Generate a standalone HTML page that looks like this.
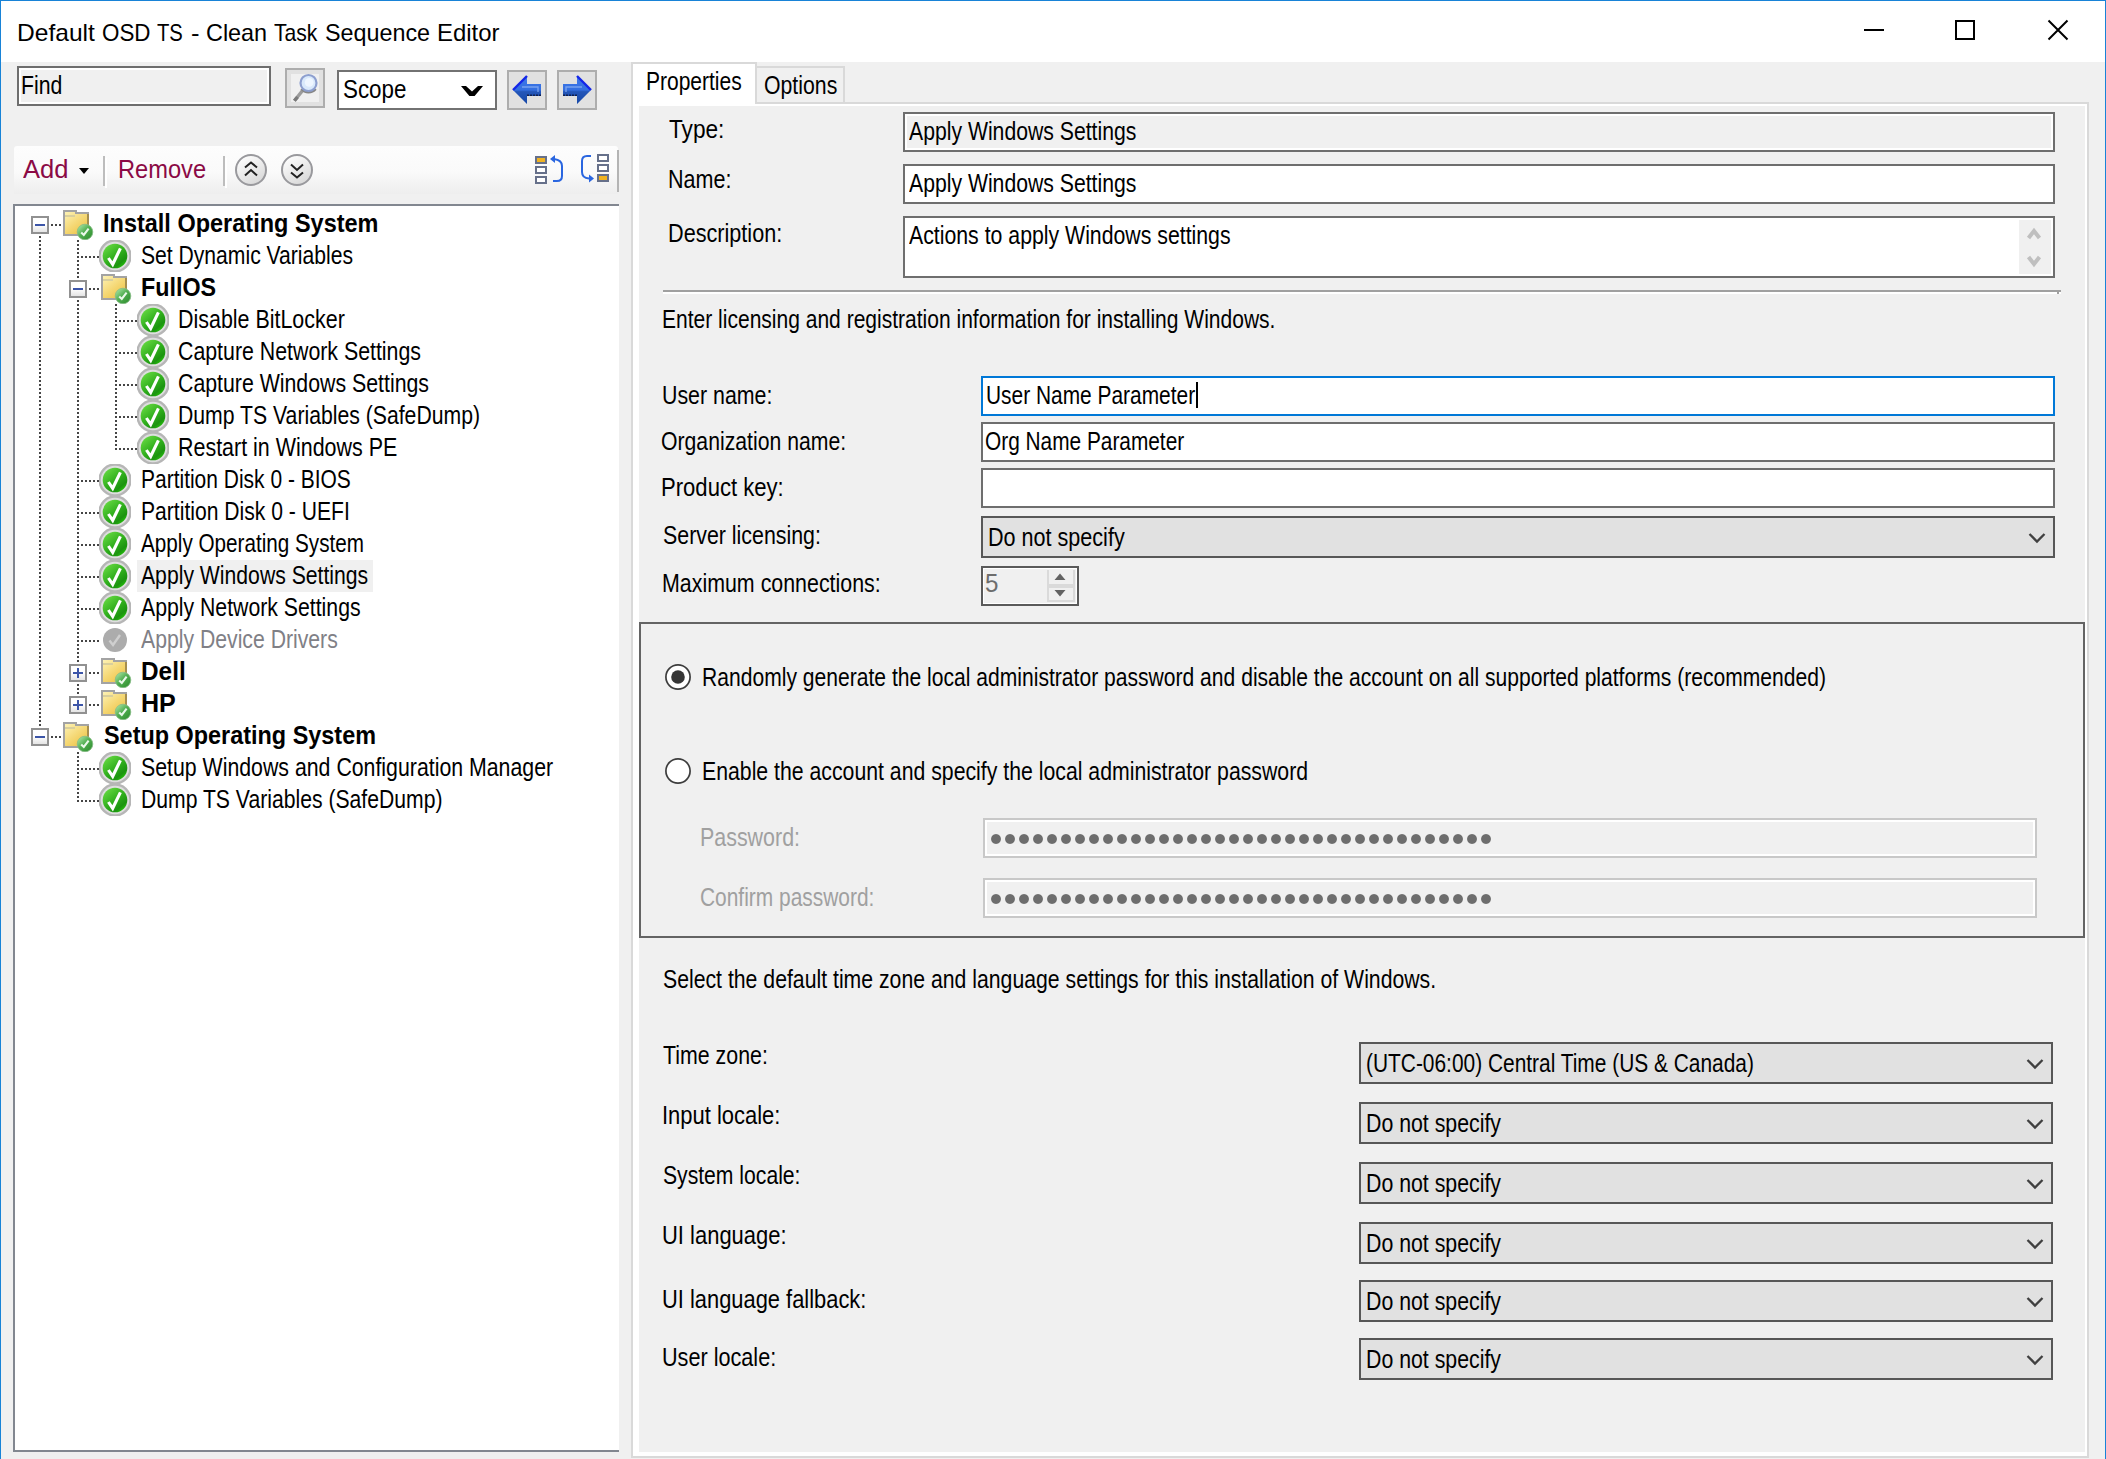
<!DOCTYPE html>
<html lang="en">
<head>
<meta charset="utf-8">
<title>Default OSD TS - Clean Task Sequence Editor</title>
<style>
html,body{margin:0;padding:0;}
body{width:2106px;height:1459px;position:relative;overflow:hidden;background:#f0f0f0;
 font-family:"Liberation Sans",sans-serif;color:#000;}
.a{position:absolute;box-sizing:border-box;}
.t{position:absolute;white-space:pre;line-height:30px;transform-origin:0 0;font-family:"Liberation Sans",sans-serif;}
/* text box: dark border + white inner */
.tb{position:absolute;box-sizing:border-box;border:2px solid #6e6e6e;background:#fff;}
.tb.ro{background:#f0f0f0;box-shadow:inset 0 0 0 2px #fff;}
.cb{position:absolute;box-sizing:border-box;border:2px solid #575757;background:#e1e1e1;}
.btn{position:absolute;box-sizing:border-box;border:2px solid #adadad;background:#e1e1e1;}
.vd{position:absolute;width:2px;background:repeating-linear-gradient(to bottom,#454545 0,#454545 2px,transparent 2px,transparent 4px);}
.hd{position:absolute;height:2px;background:repeating-linear-gradient(to right,#454545 0,#454545 2px,transparent 2px,transparent 4px);}
.eb{position:absolute;box-sizing:border-box;width:18px;height:18px;border:2px solid #919191;background:linear-gradient(#fff 45%,#e4e4e4);}
.eb i{position:absolute;left:2px;top:6px;width:10px;height:2px;background:#3c55a8;}
.eb b{position:absolute;left:6px;top:2px;width:2px;height:10px;background:#3c55a8;}
svg{position:absolute;overflow:visible;}
.pw{position:absolute;height:10px;width:504px;background:radial-gradient(circle at 5px 5px,#6d6d6d 4.4px,rgba(109,109,109,0) 5.4px) 0 0/14px 10px repeat-x;}
</style>
</head>
<body>
<svg width="0" height="0" style="left:0;top:0">
 <defs>
  <linearGradient id="gG" x1="0.15" y1="0.1" x2="0.85" y2="0.95">
   <stop offset="0" stop-color="#62d63f"/><stop offset="0.5" stop-color="#2fae1c"/><stop offset="0.8" stop-color="#1c9410"/><stop offset="1" stop-color="#25c708"/>
  </linearGradient>
  <linearGradient id="gB" x1="0.1" y1="0.1" x2="0.9" y2="0.95">
   <stop offset="0" stop-color="#a4e3a0"/><stop offset="0.45" stop-color="#52ae52"/><stop offset="1" stop-color="#2f8f2f"/>
  </linearGradient>
  <linearGradient id="gF" x1="0.1" y1="0" x2="0.9" y2="1">
   <stop offset="0" stop-color="#fdf2b4"/><stop offset="0.5" stop-color="#f5d875"/><stop offset="1" stop-color="#ecbf3e"/>
  </linearGradient>
  <linearGradient id="gC" x1="0.2" y1="0" x2="0.8" y2="1">
   <stop offset="0" stop-color="#ffffff"/><stop offset="1" stop-color="#d6d6d6"/>
  </linearGradient>
  <linearGradient id="gA" x1="0" y1="0" x2="0" y2="1">
   <stop offset="0" stop-color="#3f78ea"/><stop offset="0.5" stop-color="#346fe0"/><stop offset="0.56" stop-color="#2456b8"/><stop offset="1" stop-color="#1648a8"/>
  </linearGradient>
 </defs>
</svg>

<!-- window frame -->
<div class="a" style="left:1px;top:1px;width:2104px;height:61px;background:#fff"></div>
<div class="a" style="left:0;top:0;width:2106px;height:1px;background:#1883d7"></div>
<div class="a" style="left:0;top:0;width:1px;height:1459px;background:#1883d7"></div>
<div class="a" style="left:2105px;top:0;width:1px;height:1459px;background:#1883d7"></div>
<!-- caption buttons -->
<div class="a" style="left:1864px;top:29px;width:20px;height:2px;background:#000"></div>
<div class="a" style="left:1955px;top:20px;width:20px;height:20px;border:2px solid #000"></div>
<svg style="left:2048px;top:20px" width="20" height="20"><path d="M0.5 0.5 L19.5 19.5 M19.5 0.5 L0.5 19.5" stroke="#000" stroke-width="2" fill="none"/></svg>

<!-- ===== left panel ===== -->
<div class="tb ro" style="left:17px;top:66px;width:254px;height:40px"></div>
<div class="btn" style="left:285px;top:68px;width:40px;height:40px"></div>
<div class="a" style="left:291px;top:74px;width:28px;height:28px;background:#f0f0f0"></div>
<svg style="left:291px;top:74px" width="28" height="28">
 <path d="M11.2 17 L3.4 26.8" stroke="#9c9c9c" stroke-width="3.4" stroke-linecap="butt"/>
 <path d="M6.5 23 L3.4 26.8" stroke="#7a7a7a" stroke-width="3.4" stroke-linecap="butt"/>
 <path d="M10.4 14.8 A9.2 9.2 0 0 0 24.6 14.8" fill="none" stroke="#868686" stroke-width="2.6"/>
 <circle cx="17.5" cy="9" r="8" fill="#d9e9fb" stroke="#8d9fcf" stroke-width="2.2"/>
 <circle cx="18.2" cy="8.4" r="4.4" fill="#eef6ff"/>
</svg>
<div class="a" style="left:337px;top:70px;width:160px;height:40px;border:2px solid #727272;background:#fff"></div>
<svg style="left:461px;top:86px" width="22" height="10"><path d="M0 0 H5 L11 5.6 L17 0 H22 L13.6 10 H8.4 Z" fill="#000"/></svg>
<div class="btn" style="left:507px;top:70px;width:40px;height:40px"></div>
<div class="btn" style="left:557px;top:70px;width:40px;height:40px"></div>
<svg style="left:513px;top:76px" width="28" height="28"><path d="M0 14 L14 0 V8 H28 V20 H14 V28 Z" fill="url(#gA)"/><path d="M0 14 L14 0" stroke="#1426e8" stroke-width="2.4" fill="none"/><path d="M14 19.2 H28" stroke="#10204c" stroke-width="1.6" stroke-dasharray="2 1"/><path d="M9 11 H25 V16" fill="none" stroke="#8db2f4" stroke-width="1.4" opacity=".75"/></svg>
<svg style="left:563px;top:76px" width="28" height="28"><path d="M28 14 L14 0 V8 H0 V20 H14 V28 Z" fill="url(#gA)"/><path d="M28 14 L14 0" stroke="#1426e8" stroke-width="2.4" fill="none"/><path d="M0 19.2 H14" stroke="#10204c" stroke-width="1.6" stroke-dasharray="2 1"/><path d="M3 16 V11 H19" fill="none" stroke="#8db2f4" stroke-width="1.4" opacity=".75"/></svg>

<!-- toolbar -->
<div class="a" style="left:14px;top:146px;width:604px;height:48px;background:linear-gradient(#fdfdfd 0,#fafafa 55%,#f1f1f1 85%,#eeeeee 100%);border-radius:3px 3px 0 0"></div>
<div class="a" style="left:617px;top:150px;width:2px;height:42px;background:#b4b4b4"></div>
<svg style="left:79px;top:168px" width="10" height="6"><path d="M0 0 H10 L5 6 Z" fill="#000"/></svg>
<div class="a" style="left:103px;top:156px;width:2px;height:30px;background:#bdbdbd"></div>
<div class="a" style="left:105px;top:158px;width:2px;height:30px;background:#fff"></div>
<div class="a" style="left:223px;top:156px;width:2px;height:30px;background:#bdbdbd"></div>
<div class="a" style="left:225px;top:158px;width:2px;height:30px;background:#fff"></div>
<svg style="left:235px;top:154px" width="32" height="32"><circle cx="16" cy="16" r="15" fill="url(#gC)" stroke="#99999d" stroke-width="2"/><path d="M10 13.5 L16 8.5 L22 13.5 M10 21.5 L16 16 L22 21.5" fill="none" stroke="#222" stroke-width="2"/></svg>
<svg style="left:281px;top:154px" width="32" height="32"><circle cx="16" cy="16" r="15" fill="url(#gC)" stroke="#99999d" stroke-width="2"/><path d="M10 10.5 L16 16 L22 10.5 M10 18.5 L16 23.5 L22 18.5" fill="none" stroke="#222" stroke-width="2"/></svg>
<!-- move up / move down icons -->
<svg style="left:535px;top:154px" width="32" height="32">
 <rect x="1" y="3" width="10" height="6" fill="#f0b323" stroke="#66708a" stroke-width="2"/>
 <rect x="1" y="13" width="10" height="6" fill="#fff" stroke="#66708a" stroke-width="2"/>
 <rect x="1" y="23" width="10" height="6" fill="#fff" stroke="#66708a" stroke-width="2"/>
 <path d="M18 27 H22 Q27 27 27 22 V12 Q27 6 19 5" fill="none" stroke="#2a66e0" stroke-width="2"/>
 <path d="M15 5 L20 1 V9 Z" fill="#2a66e0"/>
</svg>
<svg style="left:579px;top:152px" width="32" height="32">
 <rect x="19" y="3" width="10" height="6" fill="#fff" stroke="#66708a" stroke-width="2"/>
 <rect x="19" y="13" width="10" height="6" fill="#fff" stroke="#66708a" stroke-width="2"/>
 <rect x="19" y="23" width="10" height="6" fill="#f0b323" stroke="#66708a" stroke-width="2"/>
 <path d="M12 4 H8 Q3 4 3 9 V20 Q3 26 10 26.5" fill="none" stroke="#2a66e0" stroke-width="2"/>
 <path d="M15 26.5 L10 22.5 V30.5 Z" fill="#2a66e0"/>
</svg>

<!-- tree -->
<div class="a" style="left:13px;top:204px;width:606px;height:1248px;background:#fff;border:2px solid #828790;border-right:none"></div>
<div class="a" style="left:137px;top:560px;width:236px;height:32px;background:#f0f0f0"></div>
<div class="vd" style="left:39px;top:236px;height:492px"></div>
<div class="vd" style="left:77px;top:240px;height:456px"></div>
<div class="vd" style="left:115px;top:304px;height:146px"></div>
<div class="vd" style="left:77px;top:752px;height:50px"></div>
<div class="hd" style="left:51px;top:224px;width:12px"></div>
<div class="eb" style="left:31px;top:216px"><i></i></div>
<svg style="left:63px;top:208px;overflow:hidden" width="32" height="32" viewBox="0 0 32 32"><path d="M1 3 H13 V5 H25 V27 H1 Z" fill="url(#gF)" stroke="#a3a3a3" stroke-width="2"/><path d="M2 8 H12" stroke="#d9cf9c" stroke-width="2"/><path d="M25 6 V26" stroke="#a58e4e" stroke-width="2"/><circle cx="22" cy="24" r="7.8" fill="url(#gB)" stroke="#86bb86" stroke-width="0.8"/><path d="M18.2 24.4 L20.8 27 L25.6 20.6" fill="none" stroke="#eaf8ea" stroke-width="2.1"/></svg>
<div class="hd" style="left:77px;top:256px;width:22px"></div>
<svg style="left:99px;top:240px;overflow:hidden" width="32" height="32" viewBox="0 0 32 32"><circle cx="16" cy="16" r="15.5" fill="#dedede" stroke="#b6b6b6" stroke-width="2.4"/><circle cx="16" cy="16" r="12.3" fill="url(#gG)"/><path d="M9.4 18 L13.7 24.3 L21.4 8.4" fill="none" stroke="#fff" stroke-width="3.1"/></svg>
<div class="hd" style="left:89px;top:288px;width:12px"></div>
<div class="eb" style="left:69px;top:280px"><i></i></div>
<svg style="left:101px;top:272px;overflow:hidden" width="32" height="32" viewBox="0 0 32 32"><path d="M1 3 H13 V5 H25 V27 H1 Z" fill="url(#gF)" stroke="#a3a3a3" stroke-width="2"/><path d="M2 8 H12" stroke="#d9cf9c" stroke-width="2"/><path d="M25 6 V26" stroke="#a58e4e" stroke-width="2"/><circle cx="22" cy="24" r="7.8" fill="url(#gB)" stroke="#86bb86" stroke-width="0.8"/><path d="M18.2 24.4 L20.8 27 L25.6 20.6" fill="none" stroke="#eaf8ea" stroke-width="2.1"/></svg>
<div class="hd" style="left:115px;top:320px;width:22px"></div>
<svg style="left:137px;top:304px;overflow:hidden" width="32" height="32" viewBox="0 0 32 32"><circle cx="16" cy="16" r="15.5" fill="#dedede" stroke="#b6b6b6" stroke-width="2.4"/><circle cx="16" cy="16" r="12.3" fill="url(#gG)"/><path d="M9.4 18 L13.7 24.3 L21.4 8.4" fill="none" stroke="#fff" stroke-width="3.1"/></svg>
<div class="hd" style="left:115px;top:352px;width:22px"></div>
<svg style="left:137px;top:336px;overflow:hidden" width="32" height="32" viewBox="0 0 32 32"><circle cx="16" cy="16" r="15.5" fill="#dedede" stroke="#b6b6b6" stroke-width="2.4"/><circle cx="16" cy="16" r="12.3" fill="url(#gG)"/><path d="M9.4 18 L13.7 24.3 L21.4 8.4" fill="none" stroke="#fff" stroke-width="3.1"/></svg>
<div class="hd" style="left:115px;top:384px;width:22px"></div>
<svg style="left:137px;top:368px;overflow:hidden" width="32" height="32" viewBox="0 0 32 32"><circle cx="16" cy="16" r="15.5" fill="#dedede" stroke="#b6b6b6" stroke-width="2.4"/><circle cx="16" cy="16" r="12.3" fill="url(#gG)"/><path d="M9.4 18 L13.7 24.3 L21.4 8.4" fill="none" stroke="#fff" stroke-width="3.1"/></svg>
<div class="hd" style="left:115px;top:416px;width:22px"></div>
<svg style="left:137px;top:400px;overflow:hidden" width="32" height="32" viewBox="0 0 32 32"><circle cx="16" cy="16" r="15.5" fill="#dedede" stroke="#b6b6b6" stroke-width="2.4"/><circle cx="16" cy="16" r="12.3" fill="url(#gG)"/><path d="M9.4 18 L13.7 24.3 L21.4 8.4" fill="none" stroke="#fff" stroke-width="3.1"/></svg>
<div class="hd" style="left:115px;top:448px;width:22px"></div>
<svg style="left:137px;top:432px;overflow:hidden" width="32" height="32" viewBox="0 0 32 32"><circle cx="16" cy="16" r="15.5" fill="#dedede" stroke="#b6b6b6" stroke-width="2.4"/><circle cx="16" cy="16" r="12.3" fill="url(#gG)"/><path d="M9.4 18 L13.7 24.3 L21.4 8.4" fill="none" stroke="#fff" stroke-width="3.1"/></svg>
<div class="hd" style="left:77px;top:480px;width:22px"></div>
<svg style="left:99px;top:464px;overflow:hidden" width="32" height="32" viewBox="0 0 32 32"><circle cx="16" cy="16" r="15.5" fill="#dedede" stroke="#b6b6b6" stroke-width="2.4"/><circle cx="16" cy="16" r="12.3" fill="url(#gG)"/><path d="M9.4 18 L13.7 24.3 L21.4 8.4" fill="none" stroke="#fff" stroke-width="3.1"/></svg>
<div class="hd" style="left:77px;top:512px;width:22px"></div>
<svg style="left:99px;top:496px;overflow:hidden" width="32" height="32" viewBox="0 0 32 32"><circle cx="16" cy="16" r="15.5" fill="#dedede" stroke="#b6b6b6" stroke-width="2.4"/><circle cx="16" cy="16" r="12.3" fill="url(#gG)"/><path d="M9.4 18 L13.7 24.3 L21.4 8.4" fill="none" stroke="#fff" stroke-width="3.1"/></svg>
<div class="hd" style="left:77px;top:544px;width:22px"></div>
<svg style="left:99px;top:528px;overflow:hidden" width="32" height="32" viewBox="0 0 32 32"><circle cx="16" cy="16" r="15.5" fill="#dedede" stroke="#b6b6b6" stroke-width="2.4"/><circle cx="16" cy="16" r="12.3" fill="url(#gG)"/><path d="M9.4 18 L13.7 24.3 L21.4 8.4" fill="none" stroke="#fff" stroke-width="3.1"/></svg>
<div class="hd" style="left:77px;top:576px;width:22px"></div>
<svg style="left:99px;top:560px;overflow:hidden" width="32" height="32" viewBox="0 0 32 32"><circle cx="16" cy="16" r="15.5" fill="#dedede" stroke="#b6b6b6" stroke-width="2.4"/><circle cx="16" cy="16" r="12.3" fill="url(#gG)"/><path d="M9.4 18 L13.7 24.3 L21.4 8.4" fill="none" stroke="#fff" stroke-width="3.1"/></svg>
<div class="hd" style="left:77px;top:608px;width:22px"></div>
<svg style="left:99px;top:592px;overflow:hidden" width="32" height="32" viewBox="0 0 32 32"><circle cx="16" cy="16" r="15.5" fill="#dedede" stroke="#b6b6b6" stroke-width="2.4"/><circle cx="16" cy="16" r="12.3" fill="url(#gG)"/><path d="M9.4 18 L13.7 24.3 L21.4 8.4" fill="none" stroke="#fff" stroke-width="3.1"/></svg>
<div class="hd" style="left:77px;top:640px;width:22px"></div>
<svg style="left:99px;top:624px;overflow:hidden" width="32" height="32" viewBox="0 0 32 32"><circle cx="16" cy="16" r="12" fill="#acacac"/><path d="M10.5 16.5 L14 21 L21 11" fill="none" stroke="#cfcfcf" stroke-width="2.4"/></svg>
<div class="hd" style="left:89px;top:672px;width:12px"></div>
<div class="eb" style="left:69px;top:664px"><i></i><b></b></div>
<svg style="left:101px;top:656px;overflow:hidden" width="32" height="32" viewBox="0 0 32 32"><path d="M1 3 H13 V5 H25 V27 H1 Z" fill="url(#gF)" stroke="#a3a3a3" stroke-width="2"/><path d="M2 8 H12" stroke="#d9cf9c" stroke-width="2"/><path d="M25 6 V26" stroke="#a58e4e" stroke-width="2"/><circle cx="22" cy="24" r="7.8" fill="url(#gB)" stroke="#86bb86" stroke-width="0.8"/><path d="M18.2 24.4 L20.8 27 L25.6 20.6" fill="none" stroke="#eaf8ea" stroke-width="2.1"/></svg>
<div class="hd" style="left:89px;top:704px;width:12px"></div>
<div class="eb" style="left:69px;top:696px"><i></i><b></b></div>
<svg style="left:101px;top:688px;overflow:hidden" width="32" height="32" viewBox="0 0 32 32"><path d="M1 3 H13 V5 H25 V27 H1 Z" fill="url(#gF)" stroke="#a3a3a3" stroke-width="2"/><path d="M2 8 H12" stroke="#d9cf9c" stroke-width="2"/><path d="M25 6 V26" stroke="#a58e4e" stroke-width="2"/><circle cx="22" cy="24" r="7.8" fill="url(#gB)" stroke="#86bb86" stroke-width="0.8"/><path d="M18.2 24.4 L20.8 27 L25.6 20.6" fill="none" stroke="#eaf8ea" stroke-width="2.1"/></svg>
<div class="hd" style="left:51px;top:736px;width:12px"></div>
<div class="eb" style="left:31px;top:728px"><i></i></div>
<svg style="left:63px;top:720px;overflow:hidden" width="32" height="32" viewBox="0 0 32 32"><path d="M1 3 H13 V5 H25 V27 H1 Z" fill="url(#gF)" stroke="#a3a3a3" stroke-width="2"/><path d="M2 8 H12" stroke="#d9cf9c" stroke-width="2"/><path d="M25 6 V26" stroke="#a58e4e" stroke-width="2"/><circle cx="22" cy="24" r="7.8" fill="url(#gB)" stroke="#86bb86" stroke-width="0.8"/><path d="M18.2 24.4 L20.8 27 L25.6 20.6" fill="none" stroke="#eaf8ea" stroke-width="2.1"/></svg>
<div class="hd" style="left:77px;top:768px;width:22px"></div>
<svg style="left:99px;top:752px;overflow:hidden" width="32" height="32" viewBox="0 0 32 32"><circle cx="16" cy="16" r="15.5" fill="#dedede" stroke="#b6b6b6" stroke-width="2.4"/><circle cx="16" cy="16" r="12.3" fill="url(#gG)"/><path d="M9.4 18 L13.7 24.3 L21.4 8.4" fill="none" stroke="#fff" stroke-width="3.1"/></svg>
<div class="hd" style="left:77px;top:800px;width:22px"></div>
<svg style="left:99px;top:784px;overflow:hidden" width="32" height="32" viewBox="0 0 32 32"><circle cx="16" cy="16" r="15.5" fill="#dedede" stroke="#b6b6b6" stroke-width="2.4"/><circle cx="16" cy="16" r="12.3" fill="url(#gG)"/><path d="M9.4 18 L13.7 24.3 L21.4 8.4" fill="none" stroke="#fff" stroke-width="3.1"/></svg>

<!-- ===== right panel: tab control ===== -->
<div class="a" style="left:631px;top:102px;width:1458px;height:1356px;border:2px solid #d9d9d9;background:#fff"></div>
<div class="a" style="left:639px;top:106px;width:1446px;height:1346px;background:#f0f0f0"></div>
<div class="a" style="left:755px;top:66px;width:90px;height:38px;border:2px solid #d9d9d9;background:#f0f0f0"></div>
<div class="a" style="left:631px;top:62px;width:126px;height:42px;border:2px solid #d9d9d9;border-bottom:none;background:#fff"></div>

<!-- header fields -->
<div class="tb ro" style="left:903px;top:112px;width:1152px;height:40px"></div>
<div class="tb" style="left:903px;top:164px;width:1152px;height:40px"></div>
<div class="tb" style="left:903px;top:216px;width:1152px;height:62px"></div>
<div class="a" style="left:2019px;top:220px;width:32px;height:54px;background:#f0f0f0"></div>
<svg style="left:2019px;top:220px" width="32" height="54"><path d="M9.5 18 L15 11 L20.5 18 M9.5 37 L15 44 L20.5 37" fill="none" stroke="#bfbfbf" stroke-width="4"/></svg>
<div class="a" style="left:663px;top:290px;width:1398px;height:2px;background:#a0a0a0"></div>
<div class="a" style="left:663px;top:292px;width:1398px;height:2px;background:#fff"></div>
<div class="a" style="left:2057px;top:292px;width:2px;height:2px;background:#a0a0a0"></div>

<!-- licensing -->
<div class="tb" style="left:981px;top:376px;width:1074px;height:40px;border-color:#0078d7"></div>
<div class="a" style="left:1196px;top:382px;width:2px;height:26px;background:#000"></div>
<div class="tb" style="left:981px;top:422px;width:1074px;height:40px"></div>
<div class="tb" style="left:981px;top:468px;width:1074px;height:40px"></div>
<div class="cb" style="left:981px;top:516px;width:1074px;height:42px"></div>
<svg style="left:2028px;top:532px" width="18" height="12"><path d="M1.5 2 L9 9.5 L16.5 2" fill="none" stroke="#404040" stroke-width="2.3"/></svg>
<div class="tb ro" style="left:981px;top:566px;width:98px;height:40px;border-color:#5a5a5a;box-shadow:inset 0 0 0 1px #fff"></div>
<div class="a" style="left:1047px;top:570px;width:28px;height:32px;border:2px solid #dadada;border-top:none;background:#f0f0f0"></div>
<div class="a" style="left:1049px;top:584px;width:24px;height:4px;background:#dadada"></div>
<svg style="left:1054px;top:573px" width="12" height="24"><path d="M6 0.5 L11.5 7 H0.5 Z M0.5 17 H11.5 L6 23.5 Z" fill="#636363"/></svg>

<!-- group box -->
<div class="a" style="left:639px;top:622px;width:1446px;height:316px;border:2px solid #646464"></div>
<svg style="left:665px;top:664px" width="26" height="26"><circle cx="13" cy="13" r="12.1" fill="#fff" stroke="#3d3d3d" stroke-width="1.7"/><circle cx="13" cy="13" r="6.8" fill="#363636"/></svg>
<svg style="left:665px;top:758px" width="26" height="26"><circle cx="13" cy="13" r="12.1" fill="#fff" stroke="#3d3d3d" stroke-width="1.7"/></svg>
<div class="a" style="left:983px;top:818px;width:1054px;height:40px;border:2px solid #c8c8c8;background:#f0f0f0;box-shadow:inset 0 0 0 2px #fff"></div>
<div class="a" style="left:983px;top:878px;width:1054px;height:40px;border:2px solid #c8c8c8;background:#f0f0f0;box-shadow:inset 0 0 0 2px #fff"></div>
<div class="pw" style="left:991px;top:834px"></div>
<div class="pw" style="left:991px;top:894px"></div>

<!-- locale combos -->
<div class="cb" style="left:1359px;top:1042px;width:694px;height:42px"></div>
<svg style="left:2026px;top:1058px" width="18" height="12"><path d="M1.5 2 L9 9.5 L16.5 2" fill="none" stroke="#404040" stroke-width="2.3"/></svg>
<div class="cb" style="left:1359px;top:1102px;width:694px;height:42px"></div>
<svg style="left:2026px;top:1118px" width="18" height="12"><path d="M1.5 2 L9 9.5 L16.5 2" fill="none" stroke="#404040" stroke-width="2.3"/></svg>
<div class="cb" style="left:1359px;top:1162px;width:694px;height:42px"></div>
<svg style="left:2026px;top:1178px" width="18" height="12"><path d="M1.5 2 L9 9.5 L16.5 2" fill="none" stroke="#404040" stroke-width="2.3"/></svg>
<div class="cb" style="left:1359px;top:1222px;width:694px;height:42px"></div>
<svg style="left:2026px;top:1238px" width="18" height="12"><path d="M1.5 2 L9 9.5 L16.5 2" fill="none" stroke="#404040" stroke-width="2.3"/></svg>
<div class="cb" style="left:1359px;top:1280px;width:694px;height:42px"></div>
<svg style="left:2026px;top:1296px" width="18" height="12"><path d="M1.5 2 L9 9.5 L16.5 2" fill="none" stroke="#404040" stroke-width="2.3"/></svg>
<div class="cb" style="left:1359px;top:1338px;width:694px;height:42px"></div>
<svg style="left:2026px;top:1354px" width="18" height="12"><path d="M1.5 2 L9 9.5 L16.5 2" fill="none" stroke="#404040" stroke-width="2.3"/></svg>

<span class="t" style="left:16.68px;top:17.68px;font-size:24px;transform:scaleX(1.0236);">Default</span>
<span class="t" style="left:101.75px;top:17.68px;font-size:24px;transform:scaleX(0.9331);">OSD</span>
<span class="t" style="left:156.88px;top:17.68px;font-size:24px;transform:scaleX(0.8434);">TS</span>
<span class="t" style="left:190.70px;top:17.68px;font-size:24px;transform:scaleX(1.0667);">-</span>
<span class="t" style="left:206.40px;top:17.68px;font-size:24px;transform:scaleX(0.9745);">Clean</span>
<span class="t" style="left:274.27px;top:17.68px;font-size:24px;transform:scaleX(0.8795);">Task</span>
<span class="t" style="left:325.27px;top:17.68px;font-size:24px;transform:scaleX(0.9721);">Sequence</span>
<span class="t" style="left:436.53px;top:17.68px;font-size:24px;transform:scaleX(0.9967);">Editor</span>
<span class="t" style="left:21.34px;top:69.99px;font-size:26px;transform:scaleX(0.8176);">Find</span>
<span class="t" style="left:342.50px;top:73.99px;font-size:26px;transform:scaleX(0.8601);">Scope</span>
<span class="t" style="left:23.00px;top:154.34px;font-size:25px;transform:scaleX(1.0214);color:#8b0a45;">Add</span>
<span class="t" style="left:117.85px;top:154.34px;font-size:25px;transform:scaleX(0.9465);color:#8b0a45;">Remove</span>
<span class="t" style="left:102.83px;top:207.99px;font-size:26px;transform:scaleX(0.9037);font-weight:bold;">Install Operating System</span>
<span class="t" style="left:140.64px;top:239.99px;font-size:26px;transform:scaleX(0.8121);">Set Dynamic Variables</span>
<span class="t" style="left:140.74px;top:271.99px;font-size:26px;transform:scaleX(0.8961);font-weight:bold;">FullOS</span>
<span class="t" style="left:178.33px;top:303.99px;font-size:26px;transform:scaleX(0.8244);">Disable BitLocker</span>
<span class="t" style="left:177.70px;top:335.99px;font-size:26px;transform:scaleX(0.8202);">Capture Network Settings</span>
<span class="t" style="left:177.70px;top:367.99px;font-size:26px;transform:scaleX(0.8192);">Capture Windows Settings</span>
<span class="t" style="left:178.34px;top:399.99px;font-size:26px;transform:scaleX(0.8153);">Dump TS Variables (SafeDump)</span>
<span class="t" style="left:178.32px;top:431.99px;font-size:26px;transform:scaleX(0.8248);">Restart in Windows PE</span>
<span class="t" style="left:140.56px;top:463.99px;font-size:26px;transform:scaleX(0.8068);">Partition Disk 0 - BIOS</span>
<span class="t" style="left:140.55px;top:495.99px;font-size:26px;transform:scaleX(0.8117);">Partition Disk 0 - UEFI</span>
<span class="t" style="left:141.30px;top:527.99px;font-size:26px;transform:scaleX(0.7953);">Apply Operating System</span>
<span class="t" style="left:141.30px;top:559.99px;font-size:26px;transform:scaleX(0.8145);">Apply Windows Settings</span>
<span class="t" style="left:141.30px;top:591.99px;font-size:26px;transform:scaleX(0.8169);">Apply Network Settings</span>
<span class="t" style="left:141.30px;top:623.99px;font-size:26px;transform:scaleX(0.8155);color:#808086;">Apply Device Drivers</span>
<span class="t" style="left:140.68px;top:655.99px;font-size:26px;transform:scaleX(0.9366);font-weight:bold;">Dell</span>
<span class="t" style="left:140.63px;top:687.99px;font-size:26px;transform:scaleX(0.9643);font-weight:bold;">HP</span>
<span class="t" style="left:103.93px;top:719.99px;font-size:26px;transform:scaleX(0.9008);font-weight:bold;">Setup Operating System</span>
<span class="t" style="left:140.63px;top:751.99px;font-size:26px;transform:scaleX(0.8193);">Setup Windows and Configuration Manager</span>
<span class="t" style="left:140.55px;top:783.99px;font-size:26px;transform:scaleX(0.8139);">Dump TS Variables (SafeDump)</span>
<span class="t" style="left:645.66px;top:65.99px;font-size:26px;transform:scaleX(0.8076);">Properties</span>
<span class="t" style="left:764.00px;top:69.99px;font-size:26px;transform:scaleX(0.8176);">Options</span>
<span class="t" style="left:669.05px;top:113.99px;font-size:26px;transform:scaleX(0.8712);">Type:</span>
<span class="t" style="left:668.22px;top:163.99px;font-size:26px;transform:scaleX(0.8283);">Name:</span>
<span class="t" style="left:668.21px;top:217.99px;font-size:26px;transform:scaleX(0.8322);">Description:</span>
<span class="t" style="left:909.20px;top:115.99px;font-size:26px;transform:scaleX(0.8152);">Apply Windows Settings</span>
<span class="t" style="left:909.20px;top:167.99px;font-size:26px;transform:scaleX(0.8152);">Apply Windows Settings</span>
<span class="t" style="left:909.00px;top:219.99px;font-size:26px;transform:scaleX(0.8181);">Actions to apply Windows settings</span>
<span class="t" style="left:661.56px;top:303.99px;font-size:26px;transform:scaleX(0.8085);">Enter licensing and registration information for installing Windows.</span>
<span class="t" style="left:661.87px;top:379.99px;font-size:26px;transform:scaleX(0.8213);">User name:</span>
<span class="t" style="left:985.99px;top:379.99px;font-size:26px;transform:scaleX(0.8040);">User Name Parameter</span>
<span class="t" style="left:661.21px;top:425.99px;font-size:26px;transform:scaleX(0.8158);">Organization name:</span>
<span class="t" style="left:985.32px;top:425.99px;font-size:26px;transform:scaleX(0.8014);">Org Name Parameter</span>
<span class="t" style="left:661.48px;top:471.99px;font-size:26px;transform:scaleX(0.8492);">Product key:</span>
<span class="t" style="left:662.53px;top:519.99px;font-size:26px;transform:scaleX(0.8215);">Server licensing:</span>
<span class="t" style="left:987.91px;top:521.99px;font-size:26px;transform:scaleX(0.8297);">Do not specify</span>
<span class="t" style="left:661.53px;top:567.99px;font-size:26px;transform:scaleX(0.8226);">Maximum connections:</span>
<span class="t" style="left:984.55px;top:567.99px;font-size:26px;transform:scaleX(0.9290);color:#6d6d6d;">5</span>
<span class="t" style="left:702.15px;top:661.99px;font-size:26px;transform:scaleX(0.8110);">Randomly generate the local administrator password and disable the account on all supported platforms (recommended)</span>
<span class="t" style="left:702.14px;top:755.99px;font-size:26px;transform:scaleX(0.8174);">Enable the account and specify the local administrator password</span>
<span class="t" style="left:699.83px;top:821.99px;font-size:26px;transform:scaleX(0.8239);color:#a0a0a0;">Password:</span>
<span class="t" style="left:699.52px;top:881.99px;font-size:26px;transform:scaleX(0.8045);color:#a0a0a0;">Confirm password:</span>
<span class="t" style="left:662.74px;top:963.99px;font-size:26px;transform:scaleX(0.8167);">Select the default time zone and language settings for this installation of Windows.</span>
<span class="t" style="left:663.07px;top:1039.99px;font-size:26px;transform:scaleX(0.8216);">Time zone:</span>
<span class="t" style="left:661.68px;top:1099.99px;font-size:26px;transform:scaleX(0.8445);">Input locale:</span>
<span class="t" style="left:662.74px;top:1159.99px;font-size:26px;transform:scaleX(0.8131);">System locale:</span>
<span class="t" style="left:662.03px;top:1219.99px;font-size:26px;transform:scaleX(0.8448);">UI language:</span>
<span class="t" style="left:662.03px;top:1283.99px;font-size:26px;transform:scaleX(0.8415);">UI language fallback:</span>
<span class="t" style="left:662.05px;top:1341.99px;font-size:26px;transform:scaleX(0.8320);">User locale:</span>
<span class="t" style="left:1365.82px;top:1047.99px;font-size:26px;transform:scaleX(0.8037);">(UTC-06:00) Central Time (US &amp; Canada)</span>
<span class="t" style="left:1366.34px;top:1107.99px;font-size:26px;transform:scaleX(0.8192);">Do not specify</span>
<span class="t" style="left:1366.34px;top:1167.99px;font-size:26px;transform:scaleX(0.8192);">Do not specify</span>
<span class="t" style="left:1366.34px;top:1227.99px;font-size:26px;transform:scaleX(0.8192);">Do not specify</span>
<span class="t" style="left:1366.34px;top:1285.99px;font-size:26px;transform:scaleX(0.8192);">Do not specify</span>
<span class="t" style="left:1366.34px;top:1343.99px;font-size:26px;transform:scaleX(0.8192);">Do not specify</span>
</body>
</html>
